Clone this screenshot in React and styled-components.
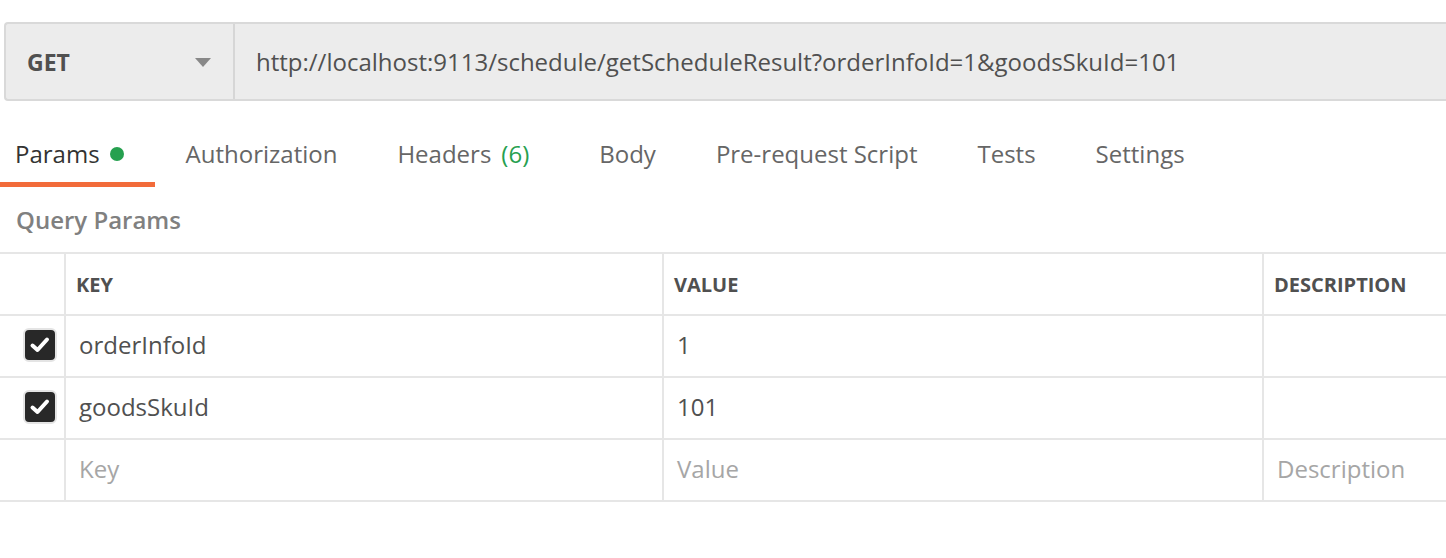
import React from 'react';
import styled, { createGlobalStyle } from 'styled-components';

const GlobalStyle = createGlobalStyle`
  body {
    margin: 0;
    background: #ffffff;
    font-family: 'Open Sans', 'Noto Sans', sans-serif;
    overflow: hidden;
  }
`;

const tabs = [
  { label: 'Params', active: true, dot: true },
  { label: 'Authorization' },
  { label: 'Headers', count: 6 },
  { label: 'Body' },
  { label: 'Pre-request Script' },
  { label: 'Tests' },
  { label: 'Settings' },
];

const rows = [
  { key: 'orderInfoId', value: '1', checked: true },
  { key: 'goodsSkuId', value: '101', checked: true },
];

const App = () => {
  return (
    <Page>
      <GlobalStyle />
      <UrlBar>
        <MethodSelect>
          <MethodText>GET</MethodText>
          <Caret />
        </MethodSelect>
        <UrlText>http://localhost:9113/schedule/getScheduleResult?orderInfoId=1&amp;goodsSkuId=101</UrlText>
      </UrlBar>

      <TabBar>
        {tabs.map((t) => (
          <Tab key={t.label} $active={t.active}>
            {t.label}
            {t.dot && <Dot />}
            {t.count && <Count>({t.count})</Count>}
          </Tab>
        ))}
      </TabBar>

      <SectionTitle>Query Params</SectionTitle>

      <Table>
        <HeadCell />
        <HeadCell>KEY</HeadCell>
        <HeadCell>VALUE</HeadCell>
        <HeadCell>DESCRIPTION</HeadCell>

        {rows.map((r) => (
          <React.Fragment key={r.key}>
            <CheckCell>
              <Checkbox>
                <svg width="24" height="24" viewBox="0 0 24 24">
                  <polyline
                    points="4.5,12.5 9.5,17 19,6.5"
                    fill="none"
                    stroke="#ffffff"
                    strokeWidth="4"
                    strokeLinecap="round"
                    strokeLinejoin="round"
                  />
                </svg>
              </Checkbox>
            </CheckCell>
            <Cell>{r.key}</Cell>
            <Cell>{r.value}</Cell>
            <Cell />
          </React.Fragment>
        ))}

        <CheckCell />
        <Cell $placeholder>Key</Cell>
        <Cell $placeholder>Value</Cell>
        <Cell $placeholder>Description</Cell>
      </Table>
    </Page>
  );
};

export default App;

// Styled Components
const Page = styled.div`
  width: 1446px;
  height: 558px;
  padding-top: 22px;
  box-sizing: border-box;
  background: #ffffff;
`;

const UrlBar = styled.div`
  display: flex;
  height: 79px;
  margin-left: 4px;
  box-sizing: border-box;
  border: 2px solid #d9d9d9;
  border-right: none;
  border-radius: 4px 0 0 4px;
  background: #ececec;
`;

const MethodSelect = styled.div`
  width: 229px;
  flex-shrink: 0;
  display: flex;
  align-items: center;
  justify-content: space-between;
  padding: 0 22px 0 21px;
  box-sizing: border-box;
  border-right: 2px solid #d6d6d6;
`;

const MethodText = styled.span`
  font-size: 23px;
  font-weight: 700;
  color: #505050;
`;

const Caret = styled.span`
  width: 0;
  height: 0;
  border-left: 8px solid transparent;
  border-right: 8px solid transparent;
  border-top: 9px solid #888888;
  margin-top: 2px;
`;

const UrlText = styled.div`
  display: flex;
  align-items: center;
  padding-left: 21px;
  font-size: 24px;
  color: #505050;
  white-space: nowrap;
`;

const TabBar = styled.div`
  display: flex;
  gap: 14px;
  height: 86px;
  align-items: stretch;
`;

const Tab = styled.div`
  display: flex;
  align-items: center;
  padding: 23px 31px 0 15px;
  font-size: 24px;
  color: ${(p) => (p.$active ? '#333333' : '#666666')};
  border-bottom: 5px solid ${(p) => (p.$active ? '#f26b3a' : 'transparent')};
  white-space: nowrap;

  &:first-child {
    margin-right: 2px;
  }
`;

const Dot = styled.span`
  width: 14px;
  height: 14px;
  border-radius: 50%;
  background: #26a04f;
  margin-left: 10px;
  margin-top: 2px;
`;

const Count = styled.span`
  color: #26a04f;
  margin-left: 10px;
  margin-right: 10px;
`;

const SectionTitle = styled.div`
  height: 65px;
  display: flex;
  align-items: center;
  padding-left: 16px;
  font-size: 24px;
  font-weight: 600;
  color: #808080;
`;

const Table = styled.div`
  display: grid;
  grid-template-columns: 64px 598px 600px 1fr;
  grid-auto-rows: 62px;
  border-top: 2px solid #e6e6e6;
`;

const HeadCell = styled.div`
  display: flex;
  align-items: center;
  padding-left: 10px;
  font-size: 20px;
  font-weight: 700;
  color: #505050;
  border-bottom: 2px solid #e6e6e6;
  border-left: 2px solid #e6e6e6;
  white-space: nowrap;
  overflow: hidden;
  &:first-child {
    border-left: none;
  }
`;

const Cell = styled.div`
  display: flex;
  align-items: center;
  padding: 0 0 4px 13px;
  font-size: 24px;
  color: ${(p) => (p.$placeholder ? '#a6a6a6' : '#505050')};
  border-bottom: 2px solid #e6e6e6;
  border-left: 2px solid #e6e6e6;
  white-space: nowrap;
  overflow: hidden;
`;

const CheckCell = styled.div`
  display: flex;
  align-items: center;
  padding: 0 0 2px 23px;
  border-bottom: 2px solid #e6e6e6;
`;

const Checkbox = styled.div`
  width: 34px;
  height: 34px;
  box-sizing: border-box;
  border: 2px solid #e4e4e4;
  border-radius: 6px;
  background: #282828;
  display: flex;
  align-items: center;
  justify-content: center;
`;
